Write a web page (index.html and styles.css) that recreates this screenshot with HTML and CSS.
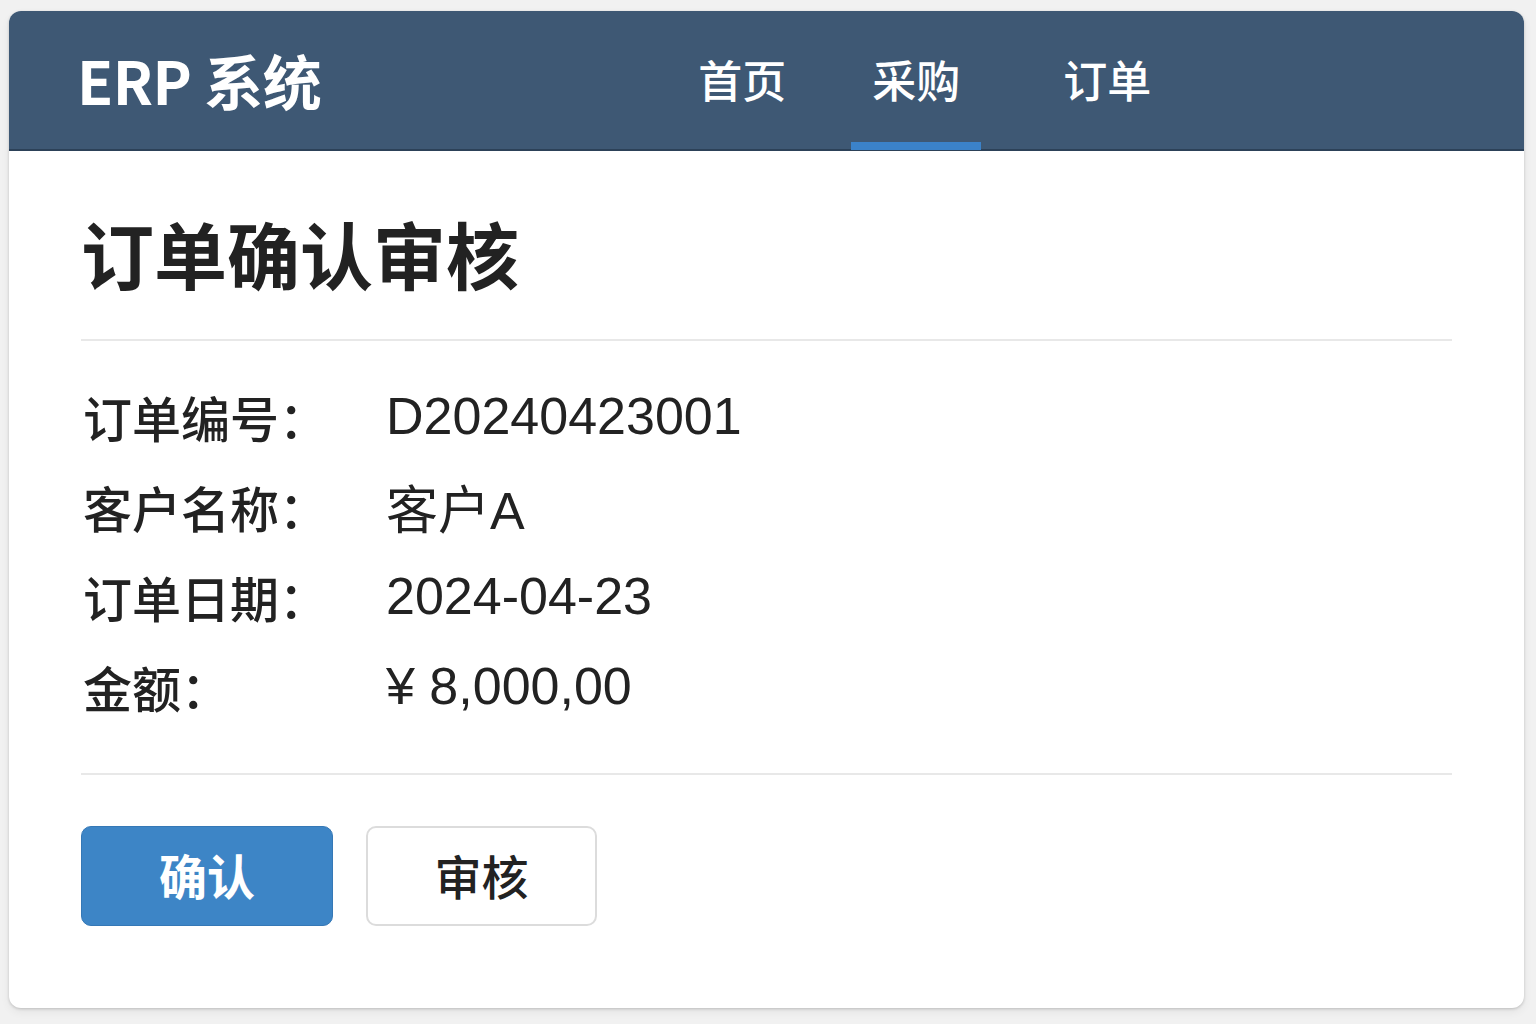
FILE: index.html
```html
<!DOCTYPE html>
<html lang="zh-CN">
<head>
<meta charset="utf-8">
<title>ERP 系统 - 订单确认审核</title>
<link rel="stylesheet" href="styles.css">
</head>
<body>
<div class="card">
  <header class="topbar">
    <div class="brand">ERP 系统</div>
    <nav class="nav">
      <a class="nav-item">首页</a>
      <a class="nav-item active">采购</a>
      <a class="nav-item">订单</a>
    </nav>
  </header>
  <main class="content">
    <h1 class="title">订单确认审核</h1>
    <hr class="divider">
    <dl class="fields">
      <div class="row"><dt>订单编号：</dt><dd>D20240423001</dd></div>
      <div class="row"><dt>客户名称：</dt><dd>客户A</dd></div>
      <div class="row"><dt>订单日期：</dt><dd>2024-04-23</dd></div>
      <div class="row"><dt>金额：</dt><dd>¥ 8,000,00</dd></div>
    </dl>
    <hr class="divider">
    <div class="actions">
      <button class="btn btn-primary">确认</button>
      <button class="btn btn-outline">审核</button>
    </div>
  </main>
</div>
</body>
</html>
```
FILE: styles.css
```css
* { box-sizing: border-box; }
html, body { margin: 0; padding: 0; }
body {
  background: #f1f1f1;
  font-family: "Noto Sans CJK SC", "Noto Sans", sans-serif;
  color: #222;
  padding: 11px 12px 16px 9px;
  height: 1024px;
}
.card {
  width: 1515px;
  height: 997px;
  background: #fff;
  border-radius: 12px;
  overflow: hidden;
  box-shadow: 0 1px 3px rgba(0,0,0,0.18), 0 4px 10px rgba(0,0,0,0.06);
  display: flex;
  flex-direction: column;
}
.topbar {
  height: 140px;
  background: #3e5874;
  border-bottom: 2px solid #2c4158;
  display: flex;
  align-items: stretch;
  padding-left: 68px;
  flex-shrink: 0;
}
.brand {
  color: #fff;
  font-size: 59px;
  font-weight: 700;
  display: flex;
  align-items: center;
  letter-spacing: -0.5px;
  padding-bottom: 2px;
}
.nav {
  display: flex;
  margin-left: 356px;
  gap: 44px;
}
.nav-item {
  color: #fff;
  font-size: 44px;
  font-weight: 500;
  display: flex;
  align-items: center;
  padding: 4px 21px 0;
  border-bottom: 8px solid transparent;
  margin-bottom: -1px;
}
.nav-item:last-child { margin-left: 17px; }
.nav-item.active { border-bottom-color: #3b82c9; }
.content {
  padding: 56px 72px 0 72px;
}
.title {
  margin: 0;
  font-size: 73px;
  font-weight: 700;
  line-height: 90px;
  color: #222;
  letter-spacing: 0;
}
.divider {
  border: 0;
  height: 2px;
  background: #e8e8e8;
  margin: 42px 0 0;
}
.fields {
  margin: 30px 0 0;
  padding: 0;
}
.row {
  display: flex;
  align-items: center;
  height: 90px;
}
.row dt {
  width: 305px;
  padding-left: 2px;
  font-size: 49px;
  font-weight: 500;
  color: #222;
}
.row dd {
  margin: 0;
  font-family: "Liberation Sans", "Noto Sans CJK SC", sans-serif;
  font-size: 52px;
  color: #222;
}
.fields + .divider { margin-top: 42px; }
.actions {
  display: flex;
  gap: 33px;
  margin-top: 51px;
}
.btn {
  height: 100px;
  border-radius: 10px;
  font-family: "Noto Sans CJK SC", sans-serif;
  font-size: 48px;
  font-weight: 700;
  padding: 0 0 4px;
  cursor: pointer;
}
.btn-primary {
  width: 252px;
  background: #3d85c6;
  border: 1px solid #3578b6;
  color: #fff;
}
.btn-outline {
  width: 231px;
  background: #fff;
  border: 2px solid #dcdcdc;
  color: #222;
  font-weight: 500;
  font-size: 47px;
}
```
